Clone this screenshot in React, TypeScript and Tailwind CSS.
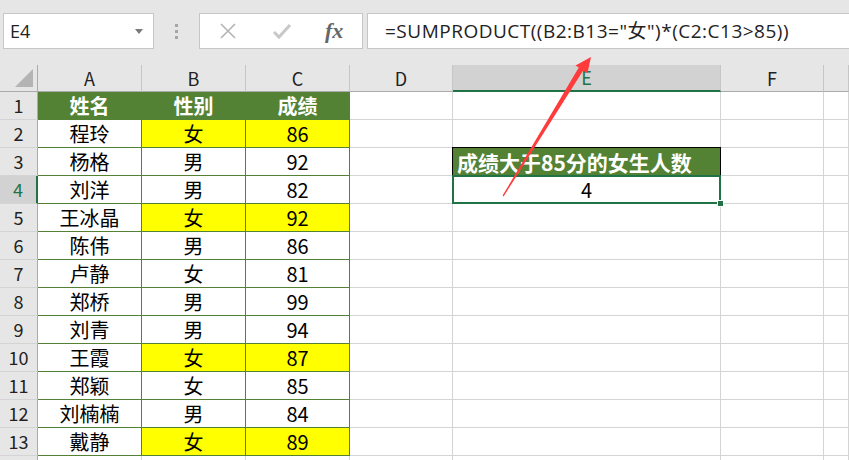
import React from "react";

const CJK = '"Noto Sans CJK SC", "Noto Sans", sans-serif';

type Row = { name: string; sex: string; score: string; hl?: boolean };

const ROWS: Row[] = [
  { name: "程玲", sex: "女", score: "86", hl: true },
  { name: "杨格", sex: "男", score: "92" },
  { name: "刘洋", sex: "男", score: "82" },
  { name: "王冰晶", sex: "女", score: "92", hl: true },
  { name: "陈伟", sex: "男", score: "86" },
  { name: "卢静", sex: "女", score: "81" },
  { name: "郑桥", sex: "男", score: "99" },
  { name: "刘青", sex: "男", score: "94" },
  { name: "王霞", sex: "女", score: "87", hl: true },
  { name: "郑颖", sex: "女", score: "85" },
  { name: "刘楠楠", sex: "男", score: "84" },
  { name: "戴静", sex: "女", score: "89", hl: true },
];

const COLS = ["A", "B", "C", "D", "E", "F", ""];

function RowHead({ n, active }: { n?: number; active?: boolean }) {
  return (
    <div
      className={`h-[28px] flex items-center justify-center text-[18px] border-b border-[#d4d4d4] ${
        active
          ? "bg-[#d2d2d2] text-[#217346] border-r-2 border-r-[#217346]"
          : "bg-[#e6e6e6] text-[#222] border-r border-r-[#ababab]"
      }`}
    >
      {n}
    </div>
  );
}

function Cell({
  children,
  tbl,
  yellow,
  green,
}: {
  children?: React.ReactNode;
  tbl?: boolean;
  yellow?: boolean;
  green?: boolean;
}) {
  const bg = green ? "bg-[#548235] text-white font-bold" : yellow ? "bg-[#ffff00]" : "bg-white";
  const bd = tbl ? "border-[#548235]" : "border-[#d4d4d4]";
  return (
    <div className={`h-[28px] border-r border-b ${bd} ${bg} flex items-center justify-center text-[20px] text-black leading-none`}>
      {children}
    </div>
  );
}

function Blank() {
  return <div className="h-[28px] border-r border-b border-[#d4d4d4] bg-white" />;
}

export default function App() {
  return (
    <div className="relative w-[849px] h-[460px] overflow-hidden bg-[#e6e6e6] select-none" style={{ fontFamily: CJK }}>
      {/* formula bar */}
      <div className="h-[65px] flex items-start pt-[13px] pl-[3px]">
        <div className="w-[151px] h-[36px] bg-white border border-[#c6c6c6] flex items-center justify-between pl-[6px] pr-[10px]">
          <span className="text-[18px] text-[#222]" style={{ fontFamily: '"Open Sans", sans-serif' }}>E4</span>
          <svg width="8" height="5" viewBox="0 0 8 5"><path d="M0 0h8L4 5z" fill="#7a7a7a" /></svg>
        </div>
        <div className="w-[45px] h-[36px] flex flex-col items-center justify-center gap-[3px]">
          <span className="w-[3px] h-[3px] bg-[#a6a6a6]" />
          <span className="w-[3px] h-[3px] bg-[#a6a6a6]" />
          <span className="w-[3px] h-[3px] bg-[#a6a6a6]" />
        </div>
        <div className="w-[164px] h-[36px] bg-white border border-[#c6c6c6] flex items-center pl-[19px]">
          <svg width="18" height="18" viewBox="0 0 18 18">
            <path d="M2 2L16 16M16 2L2 16" stroke="#b4b4b4" strokeWidth="1.6" />
          </svg>
          <svg width="20" height="18" viewBox="0 0 20 18" className="ml-[35px]">
            <path d="M2 10L7 15L18 3" stroke="#c8c8c8" strokeWidth="3" fill="none" />
          </svg>
          <span
            className="ml-[33px] text-[22px] italic font-bold text-[#666] leading-none"
            style={{ fontFamily: '"Liberation Serif", serif' }}
          >
            fx
          </span>
        </div>
        <div className="ml-[4px] flex-1 h-[36px] bg-white border border-[#c6c6c6] border-r-0 flex items-center pl-[17px]">
          <span
            className="text-[19px] tracking-[0.5px] text-[#222] whitespace-nowrap"
            style={{ fontFamily: '"Open Sans", "Noto Sans CJK SC", sans-serif' }}
          >
            =SUMPRODUCT((B2:B13="女")*(C2:C13&gt;85))
          </span>
        </div>
      </div>

      {/* sheet */}
      <div className="grid grid-cols-[38px_104px_104px_104px_103px_268px_103px_1fr]">
        <div className="h-[27px] bg-[#e6e6e6] border-r border-b border-[#ababab] flex items-end justify-end pr-[4px] pb-[4px]">
          <svg width="18" height="18" viewBox="0 0 18 18"><path d="M18 0V18H0z" fill="#b4b4b4" /></svg>
        </div>
        {COLS.map((c, i) => (
          <div
            key={i}
            className={`h-[27px] flex items-center justify-center text-[18px] border-r border-r-[#c6c6c6] ${
              c === "E"
                ? "bg-[#d2d2d2] text-[#217346] border-b-2 border-b-[#217346]"
                : "bg-[#e6e6e6] text-[#222] border-b border-b-[#ababab]"
            }`}
          >
            {c}
          </div>
        ))}

        <RowHead n={1} />
        <Cell tbl green>姓名</Cell>
        <Cell tbl green>性别</Cell>
        <Cell tbl green>成绩</Cell>
        <Blank />
        <Blank />
        <Blank />
        <Blank />

        {ROWS.map((r, i) => {
          const n = i + 2;
          return (
            <React.Fragment key={n}>
              <RowHead n={n} active={n === 4} />
              <Cell tbl>{r.name}</Cell>
              <Cell tbl yellow={r.hl}>{r.sex}</Cell>
              <Cell tbl yellow={r.hl}>{r.score}</Cell>
              <Blank />
              {n === 3 ? (
                <div className="relative h-[28px] bg-[#548235] flex items-center pl-[4px] text-white font-bold text-[21px] leading-none whitespace-nowrap">
                  <div className="absolute left-[-1px] top-[-1px] right-0 bottom-0 border border-black pointer-events-none" />
                  成绩大于85分的女生人数
                </div>
              ) : n === 4 ? (
                <div className="relative h-[28px] border-r border-b border-[#d4d4d4] bg-white flex items-center justify-center text-[20px] text-black leading-none">
                  4
                  <div className="absolute left-[-1px] top-[-1px] right-[-1px] bottom-[-1px] border-2 border-[#217346]" />
                  <div className="absolute right-[-4px] bottom-[-4px] w-[7px] h-[7px] bg-[#217346] border border-white" />
                </div>
              ) : (
                <Blank />
              )}
              <Blank />
              <Blank />
            </React.Fragment>
          );
        })}

        {/* row 14, only its top edge shows */}
        <RowHead />
        <Blank />
        <Blank />
        <Blank />
        <Blank />
        <Blank />
        <Blank />
        <Blank />
      </div>

      {/* annotation arrow */}
      <svg className="absolute left-0 top-0 pointer-events-none" width="849" height="460" viewBox="0 0 849 460">
        <polygon
          points="591,57 587.5,73 583,70.8 503.6,196.4 502.6,195.6 578.8,67.6 575.5,65.5"
          fill="#ff3b3b"
        />
      </svg>
    </div>
  );
}
